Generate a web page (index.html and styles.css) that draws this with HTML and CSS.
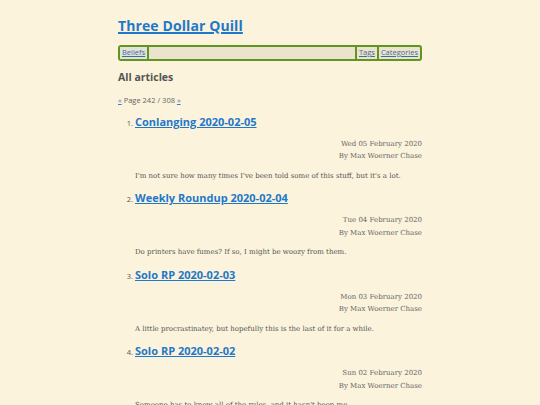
FILE: index.html
```html
<!DOCTYPE html>
<html>
<head>
<meta charset="utf-8">
<link rel="stylesheet" href="styles.css">
</head>
<body>
<div class="page">
  <h1 class="site-title"><a href="#">Three Dollar Quill</a></h1>
  <nav class="nav">
    <a class="nav-link" href="#">Beliefs</a>
    <span class="nav-fill"></span>
    <a class="nav-link" href="#">Tags</a>
    <a class="nav-link" href="#">Categories</a>
  </nav>
  <h2 class="section-title">All articles</h2>
  <p class="pager"><a href="#">«</a> Page 242 / 308 <a href="#">»</a></p>
  <ol class="articles">
    <li class="article">
      <h3 class="article-title"><a href="#">Conlanging 2020-02-05</a></h3>
      <div class="meta"><div>Wed 05 February 2020</div><div>By Max Woerner Chase</div></div>
      <p class="summary">I'm not sure how many times I've been told some of this stuff, but it's a lot.</p>
    </li>
    <li class="article">
      <h3 class="article-title"><a href="#">Weekly Roundup 2020-02-04</a></h3>
      <div class="meta"><div>Tue 04 February 2020</div><div>By Max Woerner Chase</div></div>
      <p class="summary">Do printers have fumes? If so, I might be woozy from them.</p>
    </li>
    <li class="article">
      <h3 class="article-title"><a href="#">Solo RP 2020-02-03</a></h3>
      <div class="meta"><div>Mon 03 February 2020</div><div>By Max Woerner Chase</div></div>
      <p class="summary">A little procrastinatey, but hopefully this is the last of it for a while.</p>
    </li>
    <li class="article">
      <h3 class="article-title"><a href="#">Solo RP 2020-02-02</a></h3>
      <div class="meta"><div>Sun 02 February 2020</div><div>By Max Woerner Chase</div></div>
      <p class="summary">Someone has to know all of the rules, and it hasn't been me.</p>
    </li>
  </ol>
</div>
</body>
</html>
```

FILE: styles.css
```css
html, body {
  margin: 0;
  padding: 0;
  background: #fbf3dc;
}
body {
  font-family: "DejaVu Serif", serif;
  color: #555;
}
.page {
  width: 304px;
  margin: 0 auto;
  padding-top: 16px;
}
.site-title {
  margin: 0;
  font-family: "Open Sans", "Noto Sans", sans-serif;
  font-size: 14px;
  line-height: 19px;
  font-weight: 700;
  letter-spacing: 0.1px;
}
.site-title a {
  color: #1f78c9;
  text-decoration: underline;
  text-decoration-thickness: 1.5px;
}
.nav {
  margin-top: 10px;
  display: flex;
  align-items: stretch;
  height: 11.5px;
  border: 2px solid #5f9520;
  border-radius: 3px;
  background: #ebe3cd;
  font-family: "Open Sans", "Noto Sans", sans-serif;
  font-size: 7.5px;
  line-height: 11.5px;
}
.nav-link {
  color: #3d6f9c;
  padding: 0 2px;
  text-decoration: underline;
}
.nav-link:first-child {
  background: #e2e2d8;
  border-right: 2px solid #5f9520;
}
.nav-link:nth-child(3) {
  border-left: 2px solid #5f9520;
  border-right: 2px solid #5f9520;
}
.nav-fill {
  flex: 1;
}
.section-title {
  margin: 8px 0 0;
  font-family: "Open Sans", "Noto Sans", sans-serif;
  font-size: 10.5px;
  line-height: 16px;
  font-weight: 700;
  color: #555;
}
.pager {
  margin: 9px 0 0;
  font-family: "Open Sans", "Noto Sans", sans-serif;
  font-size: 7.5px;
  line-height: 12px;
  color: #666;
}
.pager a {
  color: #3d7fb8;
}
.articles {
  margin: 8px 0 0;
  padding-left: 17px;
  font-size: 7px;
}
.article {
  margin-bottom: 8.67px;
}
.article::marker {
  font-family: "Open Sans", "Noto Sans", sans-serif;
  color: #555;
  font-size: 7.5px;
}
.article-title {
  margin: 0;
  font-family: "Open Sans", "Noto Sans", sans-serif;
  font-size: 11px;
  line-height: 16px;
  font-weight: 700;
}
.article-title a {
  color: #1f78c9;
  text-decoration: underline;
}
.meta {
  margin-top: 8px;
  text-align: right;
  font-size: 7px;
  line-height: 12.5px;
  color: #666;
}
.summary {
  margin: 7px 0 0;
  font-size: 7px;
  line-height: 12px;
  color: #555;
}
```
